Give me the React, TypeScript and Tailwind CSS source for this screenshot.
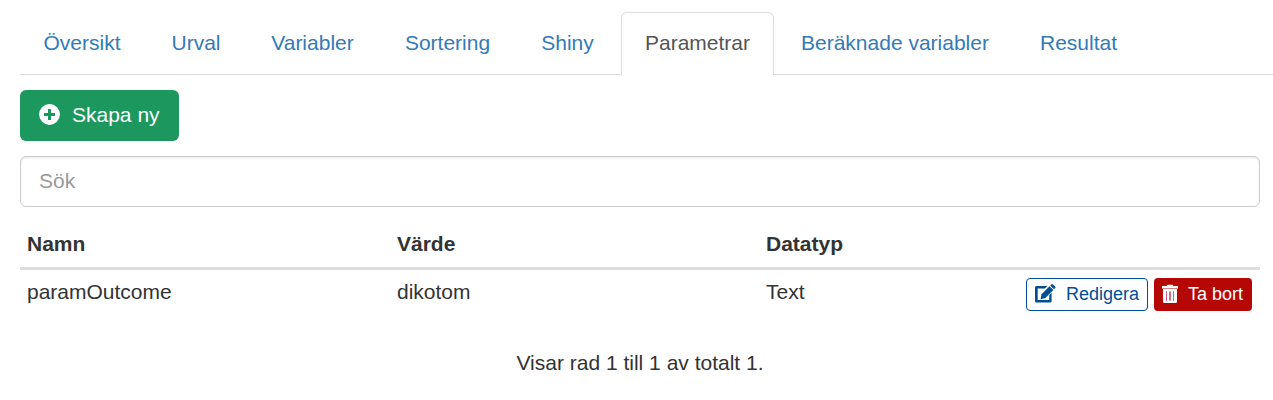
const tabs = [
  { label: "Översikt", width: "w-[124px]" },
  { label: "Urval", width: "w-[96px]" },
  { label: "Variabler", width: "w-[129px]" },
  { label: "Sortering", width: "w-[133px]" },
  { label: "Shiny", width: "w-[99px]" },
  { label: "Parametrar", width: "w-[153px]", active: true },
  { label: "Beräknade variabler", width: "w-[234px]" },
  { label: "Resultat", width: "w-[125px]" },
];

function PlusIcon() {
  return (
    <svg viewBox="0 0 21 21" className="mb-px mr-3 size-[21px] shrink-0">
      <circle cx="10.500" cy="10.500" r="10.400" fill="#fff" />
      <path d="M10.500 5v11M5 10.500h11" stroke="#1c985f" strokeWidth="3" />
    </svg>
  );
}

function EditIcon() {
  return (
    <svg viewBox="0 0 21 19" className="mr-[10px] h-[19px] w-[21px] shrink-0" fill="currentColor">
      <path d="M1.500 2h10.700L10 4.400H2.700v11.500h11.500v-4.700l2.400-2.400v8.100a1.500 1.500 0 0 1-1.500 1.500H1.500A1.500 1.500 0 0 1 0 16.900V3.500A1.500 1.500 0 0 1 1.500 2z" />
      <path d="M14.500 2.200l3.900 3.900-8 8-4.900 1.100 1.100-5z" />
      <path d="M15.200 1.500l1.100-1.100a1.200 1.200 0 0 1 1.700 0l2.100 2.100a1.200 1.200 0 0 1 0 1.700l-1.100 1.100z" />
    </svg>
  );
}

function TrashIcon() {
  return (
    <svg viewBox="0 0 18 20" className="h-[20px] w-[18px] shrink-0" fill="currentColor">
      <path d="M1 2h4.500L6.500.700h5L12.500 2H17v2.500H1z" />
      <path fillRule="evenodd" d="M2 5h14v12.500a1.500 1.500 0 0 1-1.500 1.500h-11A1.500 1.500 0 0 1 2 17.500zM5 7.500v9h1v-9zM8.500 7.500v9h1v-9zM12 7.500v9h1v-9z" />
      <path d="M5 7.500h1v9H5zM8.500 7.500h1v9h-1zM12 7.500h1v9h-1z" fill="#c95aa0" />
    </svg>
  );
}

export default function App() {
  return (
    <div className="h-[400px] overflow-hidden bg-white pl-5 pt-3 text-[21px] leading-[30px] text-[#333] [font-family:'Liberation_Sans',Arial,sans-serif]">
      <nav className="flex h-[63px] gap-1 border-b border-[#ddd]">
        {tabs.map((tab) => (
          <a
            key={tab.label}
            className={`${tab.width} flex h-[63px] shrink-0 justify-center whitespace-nowrap ${
              tab.active ? "rounded-t-[6px] border border-b-0 border-[#ddd] bg-white pt-[15px] text-[#555]" : "pt-4 text-[#337ab7]"
            }`}
          >
            {tab.label}
          </a>
        ))}
      </nav>
      <button className="mt-[15px] flex h-[51px] w-[159px] items-center rounded-[6px] bg-[#1c985f] pb-px pl-[19px] text-white">
        <PlusIcon />
        Skapa ny
      </button>
      <input
        placeholder="Sök"
        className="mt-[15px] block h-[51px] w-[1240px] rounded-[6px] border border-[#ccc] px-[18px] pb-[2px] shadow-[inset_0_1px_2px_rgba(0,0,0,.1)] outline-none placeholder:text-[#999]"
      />
      <div className="mt-[15px] w-[1240px]">
        <div className="grid h-12 grid-cols-[370px_369px_1fr] border-b-[3px] border-[#ddd] pl-[7px] pt-[7px] font-bold">
          <span>Namn</span>
          <span>Värde</span>
          <span>Datatyp</span>
        </div>
        <div className="grid h-[49px] grid-cols-[370px_369px_1fr_auto] pl-[7px] pr-2 pt-[7px]">
          <span>paramOutcome</span>
          <span>dikotom</span>
          <span>Text</span>
          <div className="flex gap-[6px] pt-px text-[18px]">
            <button className="flex h-[33px] w-[122px] items-center rounded-[4px] border border-[#004f94] pb-[2px] pl-2 text-[#004f94]">
              <EditIcon />
              Redigera
            </button>
            <button className="flex h-[33px] w-[98px] items-center rounded-[4px] bg-[#b50805] pb-[2px] pl-[7px] text-white">
              <TrashIcon />
              <span className="ml-[9px] whitespace-nowrap">Ta bort</span>
            </button>
          </div>
        </div>
      </div>
      <p className="mt-[29px] w-[1240px] text-center">Visar rad 1 till 1 av totalt 1.</p>
    </div>
  );
}
